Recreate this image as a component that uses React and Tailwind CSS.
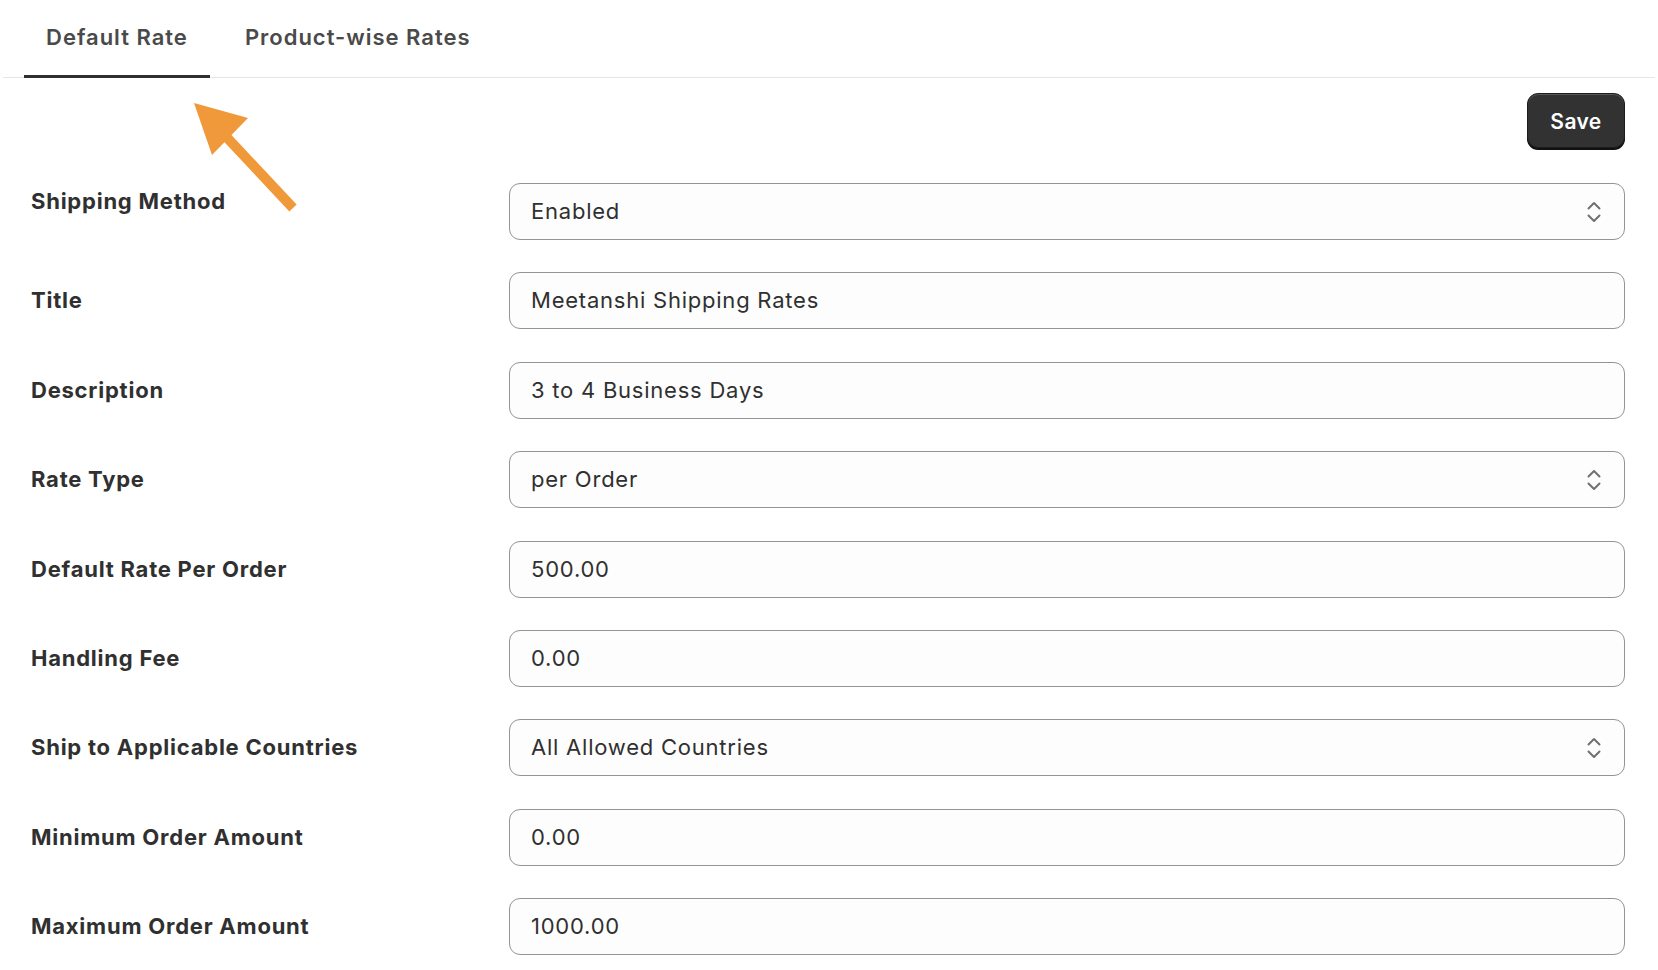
import { useState } from 'react'

const rows = [
  { label: 'Shipping Method', value: 'Enabled', select: true, lift: true },
  { label: 'Title', value: 'Meetanshi Shipping Rates' },
  { label: 'Description', value: '3 to 4 Business Days' },
  { label: 'Rate Type', value: 'per Order', select: true },
  { label: 'Default Rate Per Order', value: '500.00' },
  { label: 'Handling Fee', value: '0.00' },
  { label: 'Ship to Applicable Countries', value: 'All Allowed Countries', select: true },
  { label: 'Minimum Order Amount', value: '0.00' },
  { label: 'Maximum Order Amount', value: '1000.00' },
]

function Chevrons() {
  return (
    <svg width="14" height="22" viewBox="0 0 14 22" fill="none" className="shrink-0">
      <path d="M1.5 7.5 7 2l5.5 5.5" stroke="#707070" strokeWidth="2" strokeLinecap="round" strokeLinejoin="round" />
      <path d="M1.5 14.5 7 20l5.5-5.5" stroke="#707070" strokeWidth="2" strokeLinecap="round" strokeLinejoin="round" />
    </svg>
  )
}

function Field({ value, select }) {
  return (
    <div className="flex h-[57px] items-center justify-between rounded-[11px] border border-[#949494] bg-[#fdfdfd] pl-[21px] pr-[23px]">
      <span className="text-[22px] tracking-[0.035em] text-[#303030]">{value}</span>
      {select && <Chevrons />}
    </div>
  )
}

export default function App() {
  const [tab, setTab] = useState('default')

  return (
    <div className="relative min-h-screen bg-white px-[3px] font-['Inter','Noto_Sans',sans-serif]">
      {/* tabs */}
      <div className="flex border-b border-[#e6e6e6] pl-[21px]">
        {[
          { id: 'default', label: 'Default Rate' },
          { id: 'product', label: 'Product-wise Rates' },
        ].map((t) => (
          <button
            key={t.id}
            type="button"
            onClick={() => setTab(t.id)}
            className={`-mb-px mr-[13px] h-[78px] border-b-[3px] px-[22px] text-[22px] font-semibold tracking-[0.045em] text-[#4a4a4a] ${
              tab === t.id ? 'border-[#303030]' : 'border-transparent'
            }`}
          >
            {t.label}
          </button>
        ))}
      </div>

      <div className="pl-[28px] pr-[30px]">
        <div className="mt-[15px] flex justify-end">
          <button
            type="button"
            className="h-[55px] w-[98px] rounded-[11px] border border-[#1c1c1c] bg-[#323232] pt-[2px] text-[21px] font-semibold tracking-[0.02em] text-white shadow-[inset_0_1px_0_rgba(255,255,255,0.18),0_2px_0_#111]"
          >
            Save
          </button>
        </div>

        <div className="mt-[35px] grid grid-cols-[478px_1fr] gap-y-[32.4px]">
          {rows.map((r) => (
            <div key={r.label} className="contents">
              <div
                className={`flex items-center text-[22px] font-bold tracking-[0.035em] text-[#303030] ${
                  r.lift ? 'pb-[20px]' : ''
                }`}
              >
                {r.label}
              </div>
              <Field value={r.value} select={r.select} />
            </div>
          ))}
        </div>
      </div>

      {/* annotation arrow */}
      <svg className="pointer-events-none absolute left-0 top-0" width="320" height="230" viewBox="0 0 320 230">
        <line x1="218" y1="128" x2="293" y2="208" stroke="#F0993A" strokeWidth="10" />
        <polygon points="194,103 248,118 212,155" fill="#F0993A" />
      </svg>
    </div>
  )
}
